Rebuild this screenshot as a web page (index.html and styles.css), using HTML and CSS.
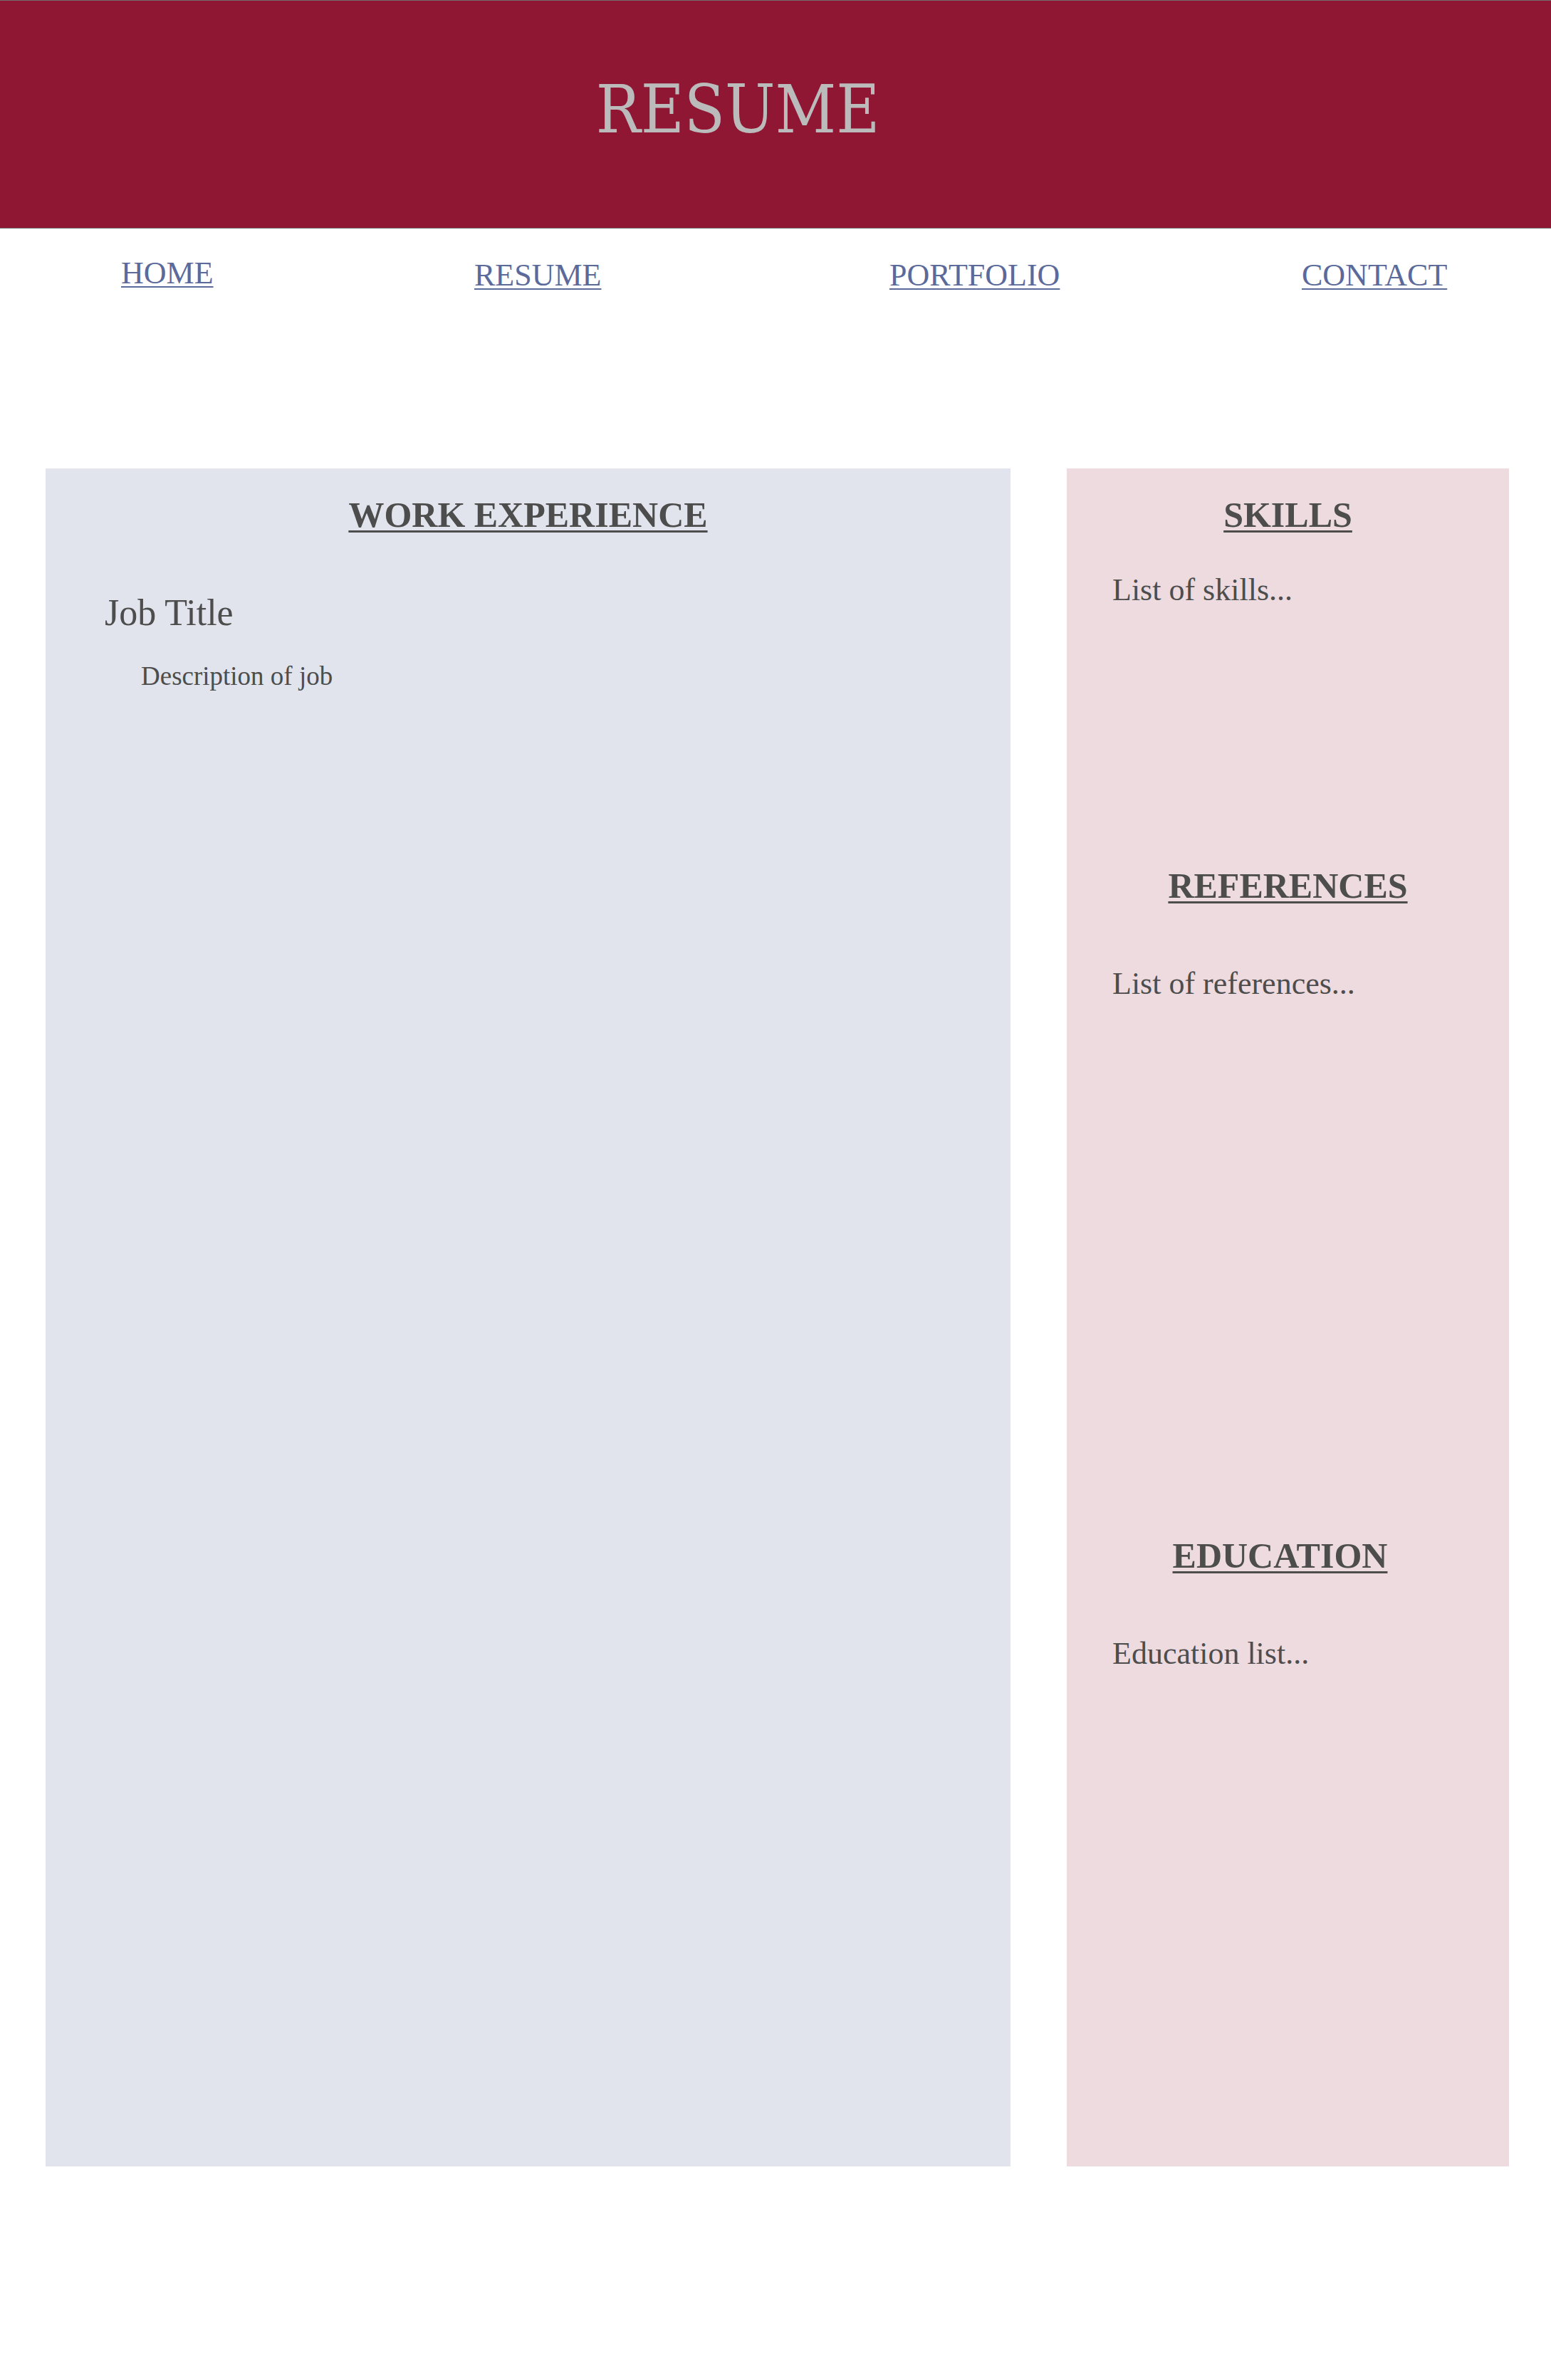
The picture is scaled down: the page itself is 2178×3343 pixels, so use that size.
FILE: index.html
```html
<!DOCTYPE html>
<html lang="en">
<head>
<meta charset="UTF-8">
<meta name="viewport" content="width=device-width, initial-scale=1.0">
<title>Resume</title>
<link rel="stylesheet" href="styles.css">
</head>
<body>

<header class="siteHeader">
    <h1 class="siteTitle">RESUME</h1>
</header>

<nav class="siteNav">
    <ul class="navList">
        <li class="navItem navHome"><a href="#">HOME</a></li>
        <li class="navItem"><a href="#">RESUME</a></li>
        <li class="navItem"><a href="#">PORTFOLIO</a></li>
        <li class="navItem"><a href="#">CONTACT</a></li>
    </ul>
</nav>

<main class="resume">
    <section class="panel workPanel">
        <h2 class="panelHeading">WORK EXPERIENCE</h2>
        <div class="job">
            <h3 class="jobTitle">Job Title</h3>
            <p class="jobDesc">Description of job</p>
        </div>
    </section>

    <aside class="panel sidePanel">
        <div class="sideBlock skills">
            <h2 class="panelHeading">SKILLS</h2>
            <p class="sideText">List of skills...</p>
        </div>
        <div class="sideBlock references">
            <h2 class="panelHeading">REFERENCES</h2>
            <p class="sideText">List of references...</p>
        </div>
        <div class="sideBlock education">
            <h2 class="panelHeading eduHeading">EDUCATION</h2>
            <p class="sideText">Education list...</p>
        </div>
    </aside>
</main>

</body>
</html>
```

FILE: styles.css
```css
/* Overall Style */
body {
    margin: 0;
    font-family: "Liberation Serif", "Times New Roman", serif;
    color: #4d4d4d;
    background: #fff;
}

/* Header */
.siteHeader {
    background-color: #8f1733;
    border-top: 1px solid #707070;
    border-bottom: 1px solid #707070;
    padding: 107px 106px 119px 0;
    text-align: center;
}
.siteTitle {
    margin: 0;
    font-family: "DejaVu Serif Condensed", "DejaVu Serif", serif;
    font-stretch: condensed;
    font-weight: normal;
    font-size: 93px;
    line-height: 1;
    color: #bbbbbb;
}

/* Navigation */
.siteNav {
    padding-top: 40px;
    height: 337px;
    box-sizing: border-box;
}
.navList {
    display: grid;
    grid-template-columns: 496px 583px 579px auto;
    margin: 0;
    padding: 0 0 0 170px;
    list-style: none;
}
.navItem {
    font-size: 44px;
    line-height: 1.2;
}
.navHome {
    margin-top: -3px;
}
.navItem a {
    color: #5b6a9b;
    text-decoration-thickness: 2px;
    text-underline-offset: 4px;
}

/* Panels */
.resume {
    display: flex;
    gap: 79px;
    padding: 0 59px 0 64px;
}
.panel {
    height: 2385px;
    box-sizing: border-box;
    padding-top: 35px;
}
.workPanel {
    flex: 0 0 1355px;
    background-color: #e1e4ec;
}
.sidePanel {
    flex: 1;
    background-color: #eddbe0;
    padding-left: 64px;
    padding-right: 64px;
}
.panelHeading {
    margin: 0;
    font-size: 50px;
    line-height: 1.2;
    font-weight: bold;
    text-align: center;
    text-decoration: underline;
    text-decoration-thickness: 3px;
    text-underline-offset: 5px;
}
.sidePanel .panelHeading {
    margin: 0 -64px 0 -64px;
}
.sidePanel .eduHeading {
    padding-right: 22px;
}

/* Work experience */
.job {
    padding: 77px 0 0 83px;
}
.jobTitle {
    margin: 0;
    font-size: 52px;
    line-height: 1.2;
    font-weight: normal;
}
.jobDesc {
    margin: 36px 0 0 51px;
    font-size: 37px;
    line-height: 1.2;
}

/* Side blocks */
.sideText {
    margin: 0;
    font-size: 44px;
    line-height: 1.2;
}
.skills {
    height: 521px;
}
.skills .sideText {
    margin-top: 50px;
}
.references {
    height: 941px;
}
.references .sideText,
.education .sideText {
    margin-top: 82px;
}
```
